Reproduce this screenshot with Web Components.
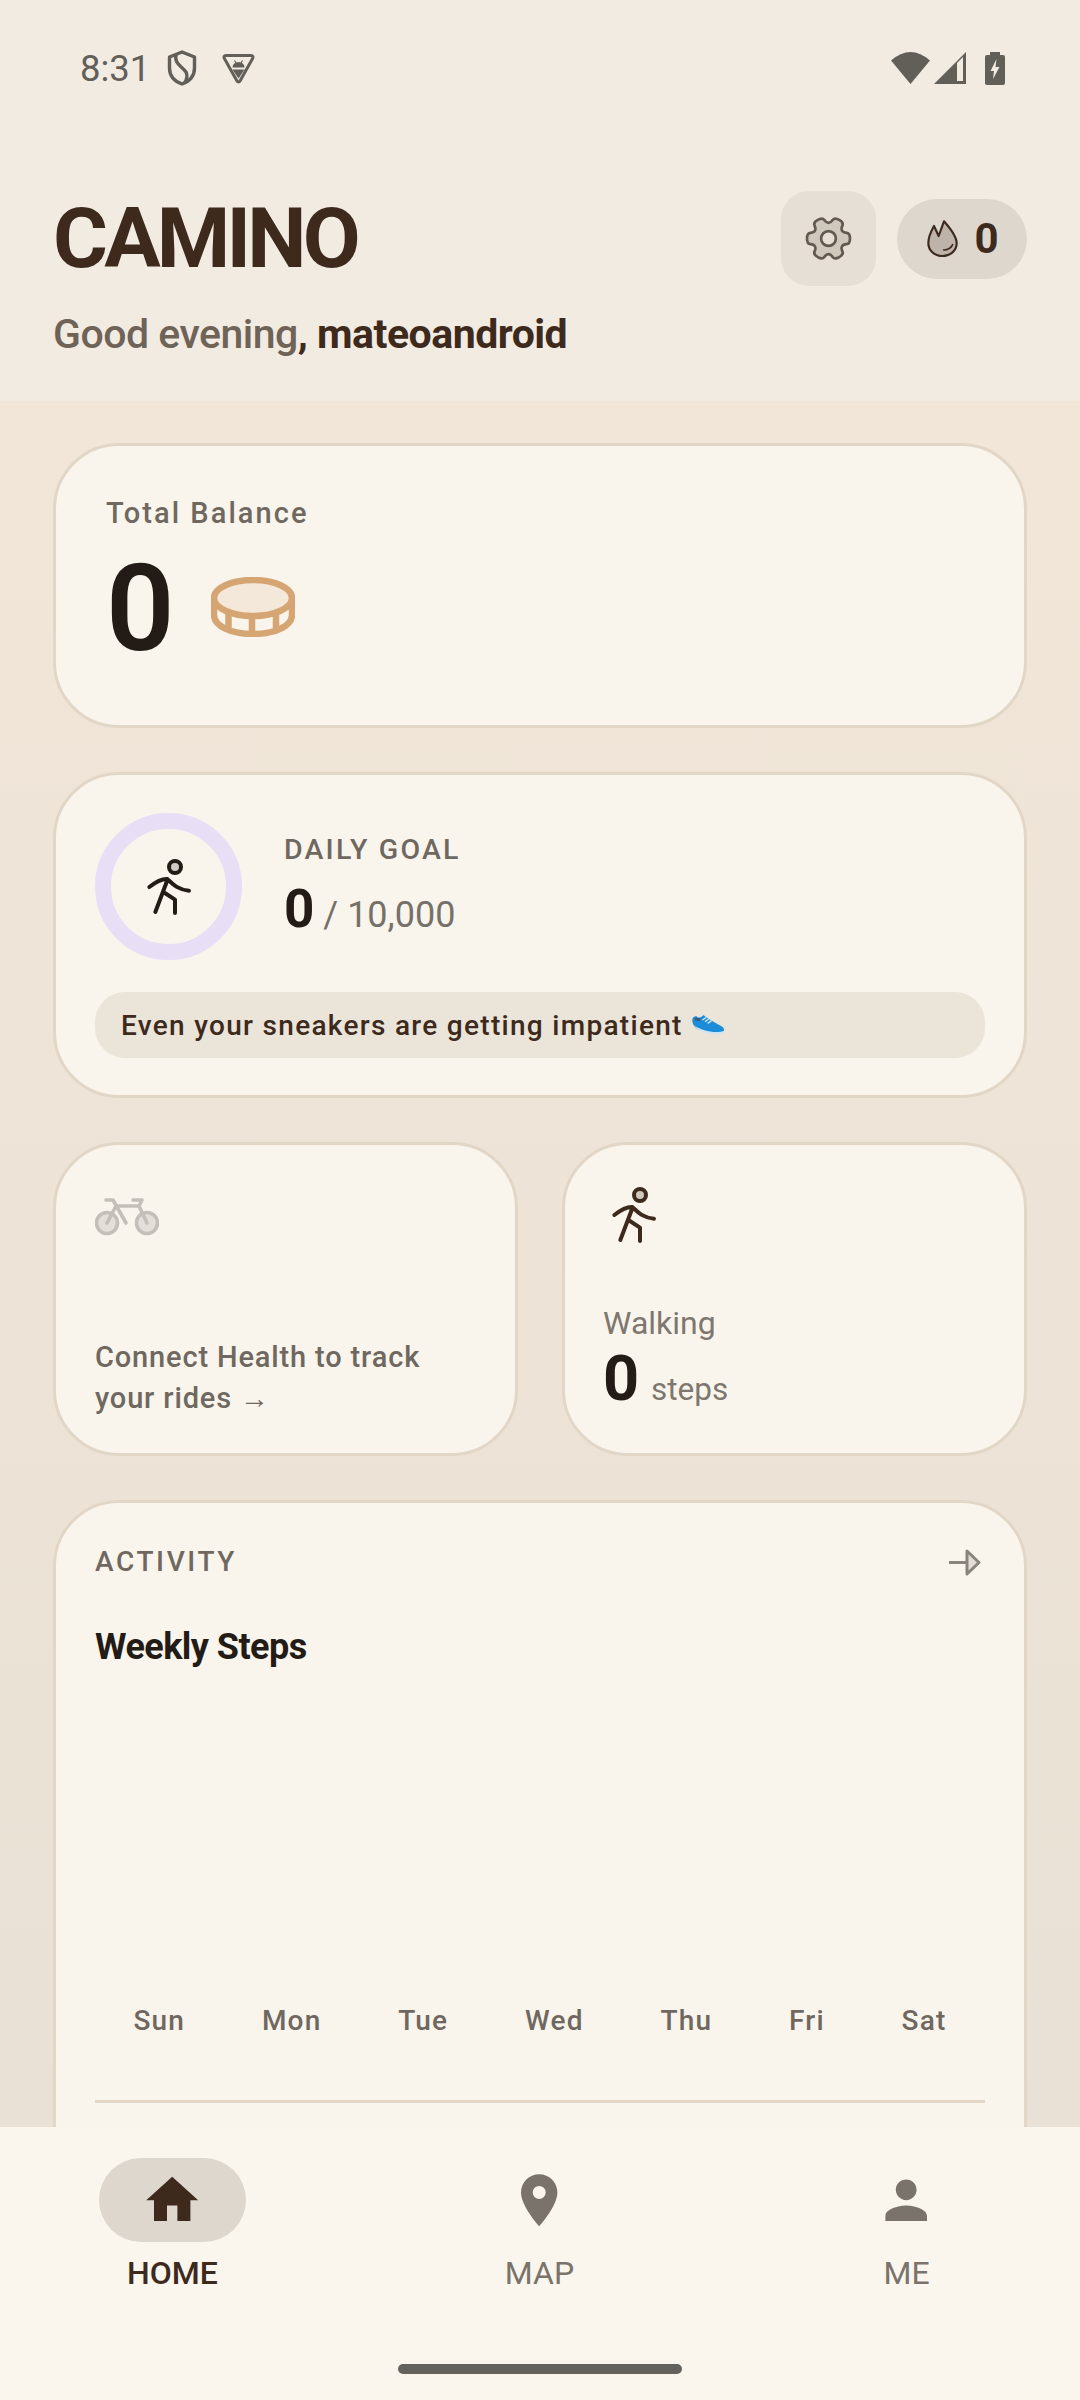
<!doctype html>
<html>
<head>
<meta charset="utf-8">
<title>Camino</title>
<style>
  html, body { margin: 0; padding: 0; }
  body { width: 1080px; height: 2400px; overflow: hidden; font-family: Roboto, "Liberation Sans", sans-serif; }
</style>
</head>
<body>
<camino-app></camino-app>
<script>
/* Camino home screen. One class per block, icons kept together so they can be reused. */
(function () {
  const gear = () => {
    // six teeth, smoothed through the midpoints
    const pts = [];
    for (let i = 0; i < 6; i++) {
      const a = i * 60;
      [[a - 14, 66], [a + 14, 66], [a + 22, 47], [a + 38, 47]].forEach(([d, r]) => {
        pts.push([r * Math.cos(d * Math.PI / 180), r * Math.sin(d * Math.PI / 180)]);
      });
    }
    const mid = (p, q) => [(p[0] + q[0]) / 2, (p[1] + q[1]) / 2];
    const s = mid(pts[pts.length - 1], pts[0]);
    let d = `M${s[0].toFixed(1)} ${s[1].toFixed(1)}`;
    pts.forEach((p, i) => {
      const m = mid(p, pts[(i + 1) % pts.length]);
      d += `Q${p[0].toFixed(1)} ${p[1].toFixed(1)} ${m[0].toFixed(1)} ${m[1].toFixed(1)}`;
    });
    return d + 'Z';
  };
  const walker = (color, head) => `<svg viewBox="190 170 150 180" width="50" height="60" fill="none" stroke="${color}" stroke-width="12" stroke-linecap="round" stroke-linejoin="round"><circle cx="283" cy="200" r="18" fill="${head}"/><path d="M206 260C225 245 245 235 260 236C275 250 290 268 325 271M260 240L224 335M248 275L283 298V338"/></svg>`;
  const ICONS = {
    shield: '<svg viewBox="0 0 30 36" width="30" height="36" fill="none" stroke="#625f59" stroke-width="3.4" stroke-linejoin="round"><path d="M15 2L27.5 7V18C27.5 26 22 31.5 15 34C8 31.5 2.5 26 2.5 18V7Z"/><path d="M9 4.5C7 14 15 16 19 22C21 26 19.5 30 17.5 33"/></svg>',
    vpn: '<svg viewBox="0 0 33 31" width="33" height="31"><path d="M4 2.5H29C31 2.5 31.5 4 30.6 5.5L18 28C17.2 29.4 15.8 29.4 15 28L2.4 5.5C1.5 4 2 2.5 4 2.5Z" fill="none" stroke="#625f59" stroke-width="3"/><path d="M10.5 14.5A6 5.5 0 0 1 22.5 14.5ZM10.5 16.5H22.5L16.5 25.5Z" fill="#625f59"/><path d="M12.5 7.5L14 10M20.5 7.5L19 10" stroke="#625f59" stroke-width="1.2"/></svg>',
    wifi: '<svg viewBox="0 0 39 32" width="39" height="32"><path d="M0 8.5Q19.5 -8.5 39 8.5L19.5 32Z" fill="#625f59"/></svg>',
    signal: '<svg viewBox="0 0 32 32" width="32" height="32"><path d="M0 32L32 0V32Z" fill="#625f59"/><path d="M23 11L29 5V29H23Z" fill="#f2ebe1"/></svg>',
    battery: '<svg viewBox="0 0 20 33" width="20" height="33"><path d="M5 0H15V3H18Q20 3 20 5V31Q20 33 18 33H2Q0 33 0 31V5Q0 3 2 3H5Z" fill="#625f59"/><path d="M11.5 7L5.5 19H9L8 27L14.5 15H10.5Z" fill="#f2ebe1"/></svg>',
    gear: `<svg viewBox="-70 -70 140 140" width="47" height="47"><path d="${gear()}" fill="#cfc8bd" stroke="#625a50" stroke-width="8" stroke-linejoin="round"/><circle r="22" fill="#e6dfd5" stroke="#625a50" stroke-width="8"/></svg>`,
    fire: '<svg viewBox="470 115 105 120" width="35" height="40" fill="none" stroke="#3d2a1d" stroke-width="6.5" stroke-linecap="round" stroke-linejoin="round"><path d="M511 166L527 122C550 148 565 168 565 188C565 210 546 226 522 226C498 226 480 209 480 187C480 168 488 152 497 136Z" fill="#bdb3a8"/><path d="M553 192C548 202 537 208 526 208" stroke-width="5"/></svg>',
    coin: '<svg viewBox="0 0 84 60" width="84" height="60" fill="none" stroke="#d6a574" stroke-width="6.5"><path d="M3 21V38C3 49 20 57 42 57S81 49 81 38V21"/><path d="M17.5 36V54M41 40V57M65 36V54"/><ellipse cx="42" cy="21" rx="39" ry="18" fill="#f3e8d9"/></svg>',
    walkDark: walker('#231c16', '#cfcbc5'),
    walkBrown: walker('#3d2a1d', '#cfc8be'),
    bike: '<svg viewBox="0 0 64 38" width="64" height="38" fill="none" stroke="#c4bfb8" stroke-width="3.6" stroke-linecap="round" stroke-linejoin="round"><circle cx="12" cy="25" r="10.5" fill="#e4e0d9"/><circle cx="52" cy="25" r="10.5" fill="#e4e0d9"/><path d="M11 2H18L31 25M12 25L21 8H44L52 25M38 2H47L44 8"/></svg>',
    arrow: '<svg viewBox="0 0 34 27" width="34" height="27"><path d="M2 13.5H20" stroke="#8a847c" stroke-width="3" fill="none"/><path d="M20 2L32 13.5L20 25Z" fill="#e2ddd6" stroke="#8a847c" stroke-width="3" stroke-linejoin="round"/></svg>',
    shoe: '<svg viewBox="95 42 105 66" width="35" height="22"><path d="M100 55C103 50 108 47 113 50C120 56 128 50 132 45C145 55 165 68 185 78C195 83 197 92 190 95C165 100 130 97 110 85C100 75 97 62 100 55Z" fill="#1b8cd8"/><path d="M102 75C112 90 135 100 165 103C180 105 192 100 194 93C170 100 130 95 102 75Z" fill="#cfe4f2"/><path d="M107 54C112 52 118 56 124 54L122 62C116 64 110 62 106 60Z" fill="#3f5a70"/><path d="M129 60L141 52M137 65L149 57M145 70L157 62" stroke="#cfe4f2" stroke-width="4" fill="none"/></svg>',
    home: '<svg viewBox="0 0 24 24" width="62.4" height="62.4"><path d="M10 20v-6h4v6h5v-8h3L12 3 2 12h3v8z" fill="currentColor"/></svg>',
    place: '<svg viewBox="0 0 24 24" width="62.4" height="62.4"><path d="M12 2C8.13 2 5 5.13 5 9c0 5.25 7 13 7 13s7-7.75 7-13c0-3.87-3.13-7-7-7zm0 9.5a2.5 2.5 0 0 1 0-5 2.5 2.5 0 0 1 0 5z" fill="currentColor"/></svg>',
    person: '<svg viewBox="0 0 24 24" width="62.4" height="62.4"><path d="M12 12c2.21 0 4-1.79 4-4s-1.79-4-4-4-4 1.79-4 4 1.79 4 4 4zm0 2c-2.67 0-8 1.34-8 4v2h16v-2c0-2.66-5.33-4-8-4z" fill="currentColor"/></svg>'
  };

  class Base extends HTMLElement {
    connectedCallback() {
      if (this.shadowRoot) return;
      this.attachShadow({ mode: 'open' }).innerHTML = this.render();
    }
  }

  class CaminoCard extends Base {
    render() {
      return `<style>
        :host { display: block; box-sizing: border-box; background: #faf5ec; border: 3px solid #e2d7c7; border-radius: 66px; }
      </style><slot></slot>`;
    }
  }

  class StatusBar extends Base {
    render() {
      return `<style>
        :host { display: flex; align-items: center; height: 136px; padding: 0 75px 0 80px; color: #625f59; font: 400 36.5px Roboto, sans-serif; }
        .ic { display: flex; margin-left: 17px; }
        .ic.v { margin-left: 25px; }
        .r { margin-left: auto; display: flex; align-items: center; gap: 4px; }
        .r .b { margin-left: 15px; }
        svg { display: block; }
      </style>
      <span>8:31</span><span class="ic">${ICONS.shield}</span><span class="ic v">${ICONS.vpn}</span>
      <span class="r">${ICONS.wifi}${ICONS.signal}<span class="b">${ICONS.battery}</span></span>`;
    }
  }

  class AppHeader extends Base {
    render() {
      return `<style>
        :host { display: block; padding: 55px 53px 43px 53px; }
        .top { display: flex; align-items: center; height: 95px; }
        h1 { margin: 0; flex: 1; font: 700 84px/95px Roboto, sans-serif; letter-spacing: -3.8px; color: #3d2a1d; }
        .gear { width: 95px; height: 95px; border-radius: 28px; background: #e6dfd5; display: flex; align-items: center; justify-content: center; }
        .streak { margin-left: 21px; width: 130px; height: 80px; border-radius: 40px; background: #ded7ce; display: flex; align-items: center; justify-content: center; gap: 14px; font: 700 42px Roboto, sans-serif; color: #3d2a1d; }
        p { margin: 25px 0 0; font: 500 41px/47px Roboto, sans-serif; letter-spacing: -.5px; color: #6f6358; }
        b { font-weight: 700; color: #3d2a1d; }
        svg { display: block; }
      </style>
      <div class="top"><h1>CAMINO</h1><div class="gear">${ICONS.gear}</div><div class="streak">${ICONS.fire}<span>0</span></div></div>
      <p>Good evening<b>, mateoandroid</b></p>`;
    }
  }

  class BalanceCard extends Base {
    render() {
      return `<style>
        :host { display: block; }
        camino-card { height: 285px; padding: 47px 50px 0; }
        .l { font: 500 29px/40px Roboto, sans-serif; letter-spacing: 2.05px; color: #6f6860; }
        .row { display: flex; align-items: center; margin-top: 24px; height: 104px; }
        .n { font: 600 120px/104px Roboto, sans-serif; color: #231c16; width: 105px; }
        svg { display: block; margin-top: -4px; }
      </style>
      <camino-card><div class="l">Total Balance</div><div class="row"><span class="n">0</span>${ICONS.coin}</div></camino-card>`;
    }
  }

  class GoalCard extends Base {
    render() {
      return `<style>
        :host { display: block; }
        camino-card { height: 326px; padding: 38px 39px 0; }
        .top { display: flex; align-items: center; gap: 42px; }
        .ring { width: 147px; height: 147px; box-sizing: border-box; border: 16px solid #e8def6; border-radius: 50%; display: flex; align-items: center; justify-content: center; }
        .txt { padding-top: 5px; }
        .l { font: 500 28.5px/34px Roboto, sans-serif; letter-spacing: 2.2px; color: #6f6860; }
        .v { font: 400 36px/62px Roboto, sans-serif; color: #76706a; margin-top: 11px; }
        .v b { font: 700 53px/62px Roboto, sans-serif; color: #231c16; }
        .msg { display: flex; align-items: center; gap: 8px; height: 66px; margin-top: 32px; padding: 0 26px; border-radius: 30px; background: #eae4d9; font: 500 28px Roboto, sans-serif; letter-spacing: 1.3px; color: #3d2a1d; }
        svg { display: block; }
      </style>
      <camino-card>
        <div class="top"><div class="ring">${ICONS.walkDark}</div><div class="txt"><div class="l">DAILY GOAL</div><div class="v"><b>0</b> / 10,000</div></div></div>
        <div class="msg"><span>Even your sneakers are getting impatient</span>${ICONS.shoe}</div>
      </camino-card>`;
    }
  }

  class RideCard extends Base {
    render() {
      return `<style>
        :host { display: block; }
        camino-card { height: 314px; padding: 53px 39px 0; }
        p { margin: 101px 0 0; font: 500 29px/41px Roboto, sans-serif; letter-spacing: .85px; color: #6f6860; }
        svg { display: block; }
      </style>
      <camino-card>${ICONS.bike}<p>Connect Health to track your rides →</p></camino-card>`;
    }
  }

  class WalkCard extends Base {
    render() {
      return `<style>
        :host { display: block; }
        camino-card { height: 314px; padding: 40px 38px 0; }
        svg { display: block; margin-left: 6px; }
        .l { margin-top: 58px; font: 400 32px/40px Roboto, sans-serif; color: #7d776f; }
        .v { font: 400 31.5px/72px Roboto, sans-serif; color: #7d776f; }
        .v b { font: 700 63px/72px Roboto, sans-serif; color: #231c16; margin-right: 4px; }
      </style>
      <camino-card>${ICONS.walkBrown}<div class="l">Walking</div><div class="v"><b>0</b> steps</div></camino-card>`;
    }
  }

  class ActivityCard extends Base {
    render() {
      const days = ['Sun', 'Mon', 'Tue', 'Wed', 'Thu', 'Fri', 'Sat'];
      return `<style>
        :host { display: block; }
        camino-card { height: 700px; padding: 42px 39px 0; }
        .top { display: flex; align-items: center; justify-content: space-between; height: 34px; padding-right: 4px; }
        .l { font: 500 28px/34px Roboto, sans-serif; letter-spacing: 2.6px; color: #6f6860; }
        h2 { margin: 46px 0 0; font: 700 36px/44px Roboto, sans-serif; letter-spacing: -.55px; color: #231c16; }
        .days { display: flex; justify-content: space-around; margin-top: 334px; font: 500 28px/36px Roboto, sans-serif; letter-spacing: 1.2px; color: #6f6860; }
        hr { margin: 61px 0 0; border: 0; height: 3px; background: #e2d7c7; }
        svg { display: block; }
      </style>
      <camino-card>
        <div class="top"><span class="l">ACTIVITY</span>${ICONS.arrow}</div>
        <h2>Weekly Steps</h2>
        <div class="days">${days.map(d => `<span>${d}</span>`).join('')}</div>
        <hr>
      </camino-card>`;
    }
  }

  class NavItem extends Base {
    render() {
      const on = this.hasAttribute('active');
      return `<style>
        :host { display: flex; flex-direction: column; align-items: center; width: 147px; color: ${on ? '#3d2a1d' : '#7a736b'}; font: ${on ? 500 : 400} 32px/40px Roboto, sans-serif; }
        .i { width: 147px; height: 84px; border-radius: 42px; display: flex; align-items: center; justify-content: center; background: ${on ? '#ded7ce' : 'transparent'}; }
        span { margin-top: 11px; }
        svg { display: block; }
      </style>
      <div class="i">${ICONS[this.getAttribute('icon')]}</div><span><slot></slot></span>`;
    }
  }

  class BottomNav extends Base {
    render() {
      return `<style>
        :host { display: block; height: 273px; background: #faf6ee; box-sizing: border-box; padding-top: 31px; }
        .row { display: flex; justify-content: space-between; padding: 0 100px 0 99px; }
        .bar { width: 284px; height: 10px; border-radius: 5px; background: #64625d; margin: 71px auto 0; }
      </style>
      <div class="row"><nav-item icon="home" active>HOME</nav-item><nav-item icon="place">MAP</nav-item><nav-item icon="person">ME</nav-item></div>
      <div class="bar"></div>`;
    }
  }

  class CaminoApp extends Base {
    render() {
      return `<style>
        :host { display: flex; flex-direction: column; width: 1080px; height: 2400px; background: #f2ebe1; overflow: hidden; }
        main { flex: 1; min-height: 0; overflow: hidden; display: flex; flex-direction: column; gap: 44px; padding: 42px 53px 0; background: linear-gradient(#f1e6d8, #e9e1d5); }
        .two { display: grid; grid-template-columns: 1fr 1fr; gap: 44px; }
        bottom-nav { flex: none; }
      </style>
      <status-bar></status-bar>
      <app-header></app-header>
      <main>
        <balance-card></balance-card>
        <goal-card></goal-card>
        <div class="two"><ride-card></ride-card><walk-card></walk-card></div>
        <activity-card></activity-card>
      </main>
      <bottom-nav></bottom-nav>`;
    }
  }

  customElements.define('camino-card', CaminoCard);
  customElements.define('status-bar', StatusBar);
  customElements.define('app-header', AppHeader);
  customElements.define('balance-card', BalanceCard);
  customElements.define('goal-card', GoalCard);
  customElements.define('ride-card', RideCard);
  customElements.define('walk-card', WalkCard);
  customElements.define('activity-card', ActivityCard);
  customElements.define('nav-item', NavItem);
  customElements.define('bottom-nav', BottomNav);
  customElements.define('camino-app', CaminoApp);
})();
</script>
</body>
</html>
